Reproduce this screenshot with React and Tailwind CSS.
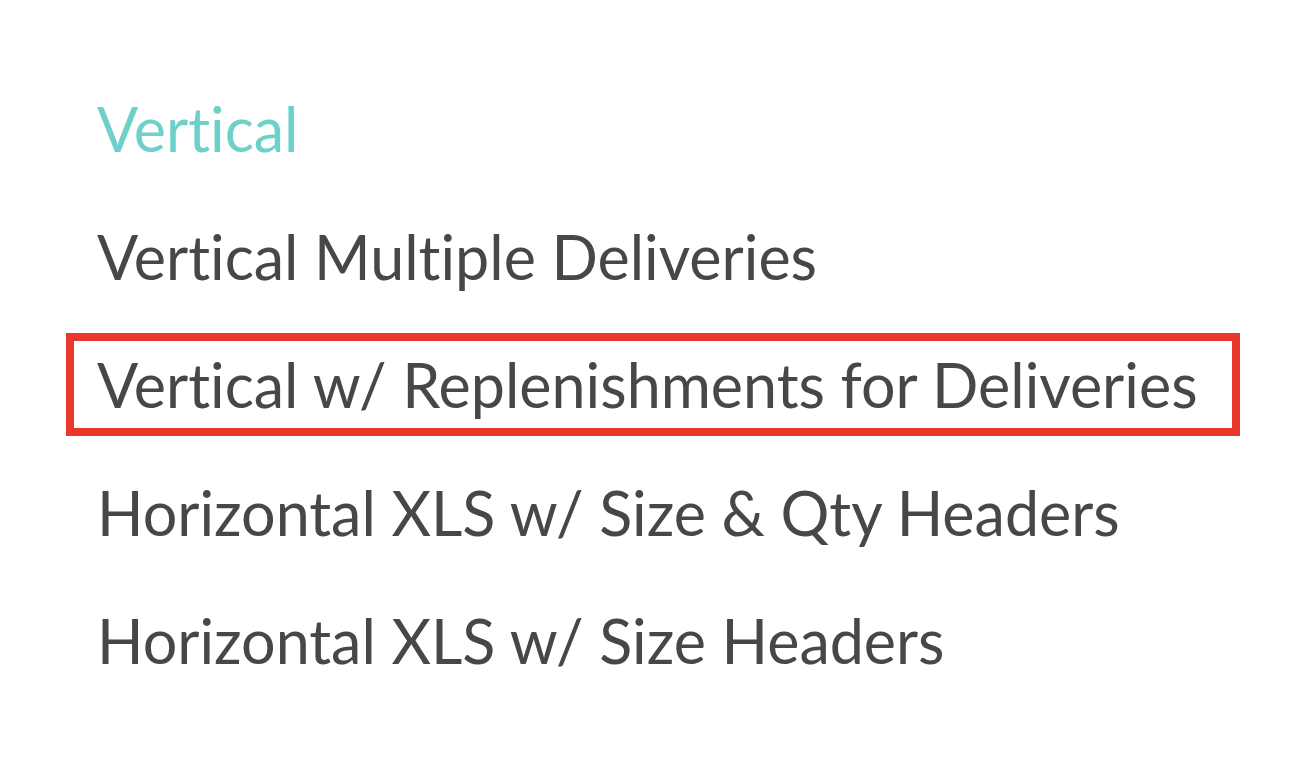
export default function App() {
  const items = [
    { t: "Vertical", teal: true },
    { t: "Vertical Multiple Deliveries" },
    { t: "Vertical w/ Replenishments for Deliveries", sel: true },
    { t: "Horizontal XLS w/ Size & Qty Headers" },
    { t: "Horizontal XLS w/ Size Headers" },
  ];
  return (
    <div className="w-[1298px] h-[764px] bg-white overflow-hidden [font-variant-ligatures:none]" style={{ fontFamily: "Lato, 'Open Sans', sans-serif" }}>
      <div className="pt-[64px] pl-[66px] flex flex-col">
        {items.map((it, i) => (
          <div key={i} className="h-[128px] flex items-center">
            {it.sel ? (
              <div className="h-[103px] w-[1174px] border-[8px] border-[#e8372b] pl-[23px] flex items-center">
                <span className="text-[61px] leading-none text-[#474747]">{it.t}</span>
              </div>
            ) : (
              <div className="pl-[31px]">
                <span className={"text-[61px] leading-none " + (it.teal ? "text-[#6ed1c9]" : "text-[#474747]")}>{it.t}</span>
              </div>
            )}
          </div>
        ))}
      </div>
    </div>
  );
}
